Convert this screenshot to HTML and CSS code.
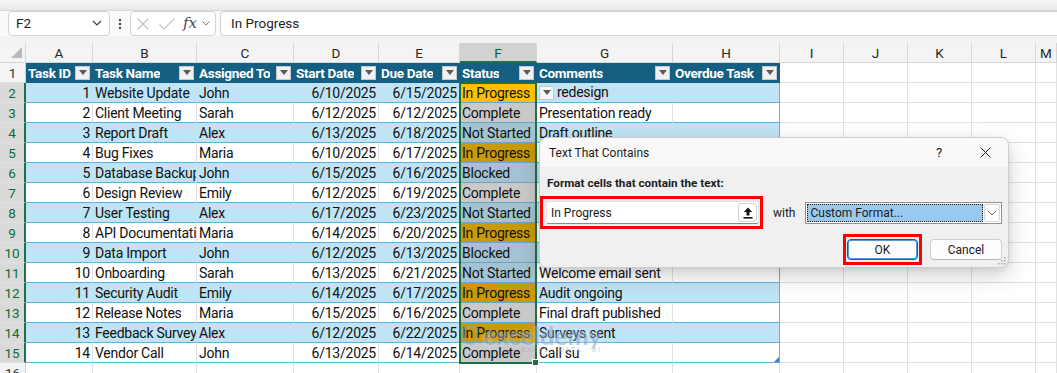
FILE: index.html
```html
<!DOCTYPE html>
<html lang="en">
<head>
<meta charset="utf-8">
<title>Text That Contains</title>
<link rel="stylesheet" href="styles.css">
</head>
<body>
<div class="app">
  <div class="ribbon-edge"></div>
  <div class="formula-bar">
    <div class="box name-box"><span>F2</span>
      <svg width="10" height="6" viewBox="0 0 10 6"><path d="M1 1 L5 5 L9 1" fill="none" stroke="#3a3a3a" stroke-width="1.2"/></svg>
    </div>
    <div class="fb-dots">
      <svg width="4" height="12" viewBox="0 0 4 12"><circle cx="2" cy="2" r="1.2" fill="#444"/><circle cx="2" cy="6" r="1.2" fill="#444"/><circle cx="2" cy="10" r="1.2" fill="#444"/></svg>
    </div>
    <div class="box fx-box">
      <svg class="ic-x" width="12" height="12" viewBox="0 0 12 12"><path d="M0.5 0.5 L11.5 11.5 M11.5 0.5 L0.5 11.5" stroke="#c2c2c2" stroke-width="1.1"/></svg>
      <svg class="ic-ok" width="16" height="12" viewBox="0 0 16 12"><path d="M0.5 6.5 L5 11 L15.5 0.5" fill="none" stroke="#c2c2c2" stroke-width="1.1"/></svg>
      <span class="fx">fx</span>
      <svg class="ic-chev" width="8" height="5" viewBox="0 0 8 5"><path d="M0.5 0.5 L4 4 L7.5 0.5" fill="none" stroke="#777" stroke-width="1"/></svg>
    </div>
    <div class="box formula-input">In Progress</div>
  </div>
  <div class="strip"></div>

  <div class="sheet">
    <div class="row colhead">
      <div class="corner"><svg width="11" height="11" viewBox="0 0 11 11"><path d="M11 0 L11 11 L0 11 Z" fill="#b9b9b9"/></svg></div>
      <div>A</div><div>B</div><div>C</div><div>D</div><div>E</div><div class="sel">F</div><div>G</div><div>H</div><div>I</div><div>J</div><div>K</div><div>L</div><div>M</div>
    </div>

    <div class="row thead">
      <div class="rh">1</div>
      <div class="h"><span class="hl-txt">Task ID</span><span class="fbtn"><svg width="8" height="5" viewBox="0 0 8 5"><path d="M0 0 H8 L4 5 Z" fill="#5a5a5a"/></svg></span></div>
      <div class="h"><span class="hl-txt">Task Name</span><span class="fbtn"><svg width="8" height="5" viewBox="0 0 8 5"><path d="M0 0 H8 L4 5 Z" fill="#5a5a5a"/></svg></span></div>
      <div class="h"><span class="hl-txt">Assigned To</span><span class="fbtn"><svg width="8" height="5" viewBox="0 0 8 5"><path d="M0 0 H8 L4 5 Z" fill="#5a5a5a"/></svg></span></div>
      <div class="h"><span class="hl-txt">Start Date</span><span class="fbtn"><svg width="8" height="5" viewBox="0 0 8 5"><path d="M0 0 H8 L4 5 Z" fill="#5a5a5a"/></svg></span></div>
      <div class="h"><span class="hl-txt">Due Date</span><span class="fbtn"><svg width="8" height="5" viewBox="0 0 8 5"><path d="M0 0 H8 L4 5 Z" fill="#5a5a5a"/></svg></span></div>
      <div class="h"><span class="hl-txt">Status</span><span class="fbtn"><svg width="8" height="5" viewBox="0 0 8 5"><path d="M0 0 H8 L4 5 Z" fill="#5a5a5a"/></svg></span></div>
      <div class="h"><span class="hl-txt">Comments</span><span class="fbtn"><svg width="8" height="5" viewBox="0 0 8 5"><path d="M0 0 H8 L4 5 Z" fill="#5a5a5a"/></svg></span></div>
      <div class="h"><span class="hl-txt">Overdue Task</span><span class="fbtn"><svg width="8" height="5" viewBox="0 0 8 5"><path d="M0 0 H8 L4 5 Z" fill="#5a5a5a"/></svg></span></div>
      <div></div><div></div><div></div><div></div><div></div>
    </div>

    <div class="row band">
      <div class="rh sel">2</div>
      <div class="t num">1</div><div class="t">Website Update</div><div class="t">John</div><div class="t num">6/10/2025</div><div class="t num">6/15/2025</div>
      <div class="t st ip act">In Progress</div>
      <div class="t cmt"><span class="dd"><svg width="8" height="5" viewBox="0 0 8 5"><path d="M0 0 H8 L4 5 Z" fill="#5a5a5a"/></svg></span>redesign</div>
      <div class="t te"></div>
      <div></div><div></div><div></div><div></div><div></div>
    </div>

    <div class="row plain">
      <div class="rh sel">3</div>
      <div class="t num">2</div><div class="t">Client Meeting</div><div class="t">Sarah</div><div class="t num">6/12/2025</div><div class="t num">6/12/2025</div>
      <div class="t st cp">Complete</div>
      <div class="t">Presentation ready</div>
      <div class="t te"></div>
      <div></div><div></div><div></div><div></div><div></div>
    </div>

    <div class="row band">
      <div class="rh sel">4</div>
      <div class="t num">3</div><div class="t">Report Draft</div><div class="t">Alex</div><div class="t num">6/13/2025</div><div class="t num">6/18/2025</div>
      <div class="t st ns">Not Started</div>
      <div class="t">Draft outline</div>
      <div class="t te"></div>
      <div></div><div></div><div></div><div></div><div></div>
    </div>

    <div class="row plain">
      <div class="rh sel">5</div>
      <div class="t num">4</div><div class="t">Bug Fixes</div><div class="t">Maria</div><div class="t num">6/10/2025</div><div class="t num">6/17/2025</div>
      <div class="t st ip">In Progress</div>
      <div class="t">In review</div>
      <div class="t te"></div>
      <div></div><div></div><div></div><div></div><div></div>
    </div>

    <div class="row band">
      <div class="rh sel">6</div>
      <div class="t num">5</div><div class="t">Database Backup</div><div class="t">John</div><div class="t num">6/15/2025</div><div class="t num">6/16/2025</div>
      <div class="t st ns">Blocked</div>
      <div class="t">Awaiting access</div>
      <div class="t te"></div>
      <div></div><div></div><div></div><div></div><div></div>
    </div>

    <div class="row plain">
      <div class="rh sel">7</div>
      <div class="t num">6</div><div class="t">Design Review</div><div class="t">Emily</div><div class="t num">6/12/2025</div><div class="t num">6/19/2025</div>
      <div class="t st cp">Complete</div>
      <div class="t">Client approved</div>
      <div class="t te"></div>
      <div></div><div></div><div></div><div></div><div></div>
    </div>

    <div class="row band">
      <div class="rh sel">8</div>
      <div class="t num">7</div><div class="t">User Testing</div><div class="t">Alex</div><div class="t num">6/17/2025</div><div class="t num">6/23/2025</div>
      <div class="t st ns">Not Started</div>
      <div class="t">Awaiting feedback</div>
      <div class="t te"></div>
      <div></div><div></div><div></div><div></div><div></div>
    </div>

    <div class="row plain">
      <div class="rh sel">9</div>
      <div class="t num">8</div><div class="t">API Documentation</div><div class="t">Maria</div><div class="t num">6/14/2025</div><div class="t num">6/20/2025</div>
      <div class="t st ip">In Progress</div>
      <div class="t">as per spec</div>
      <div class="t te"></div>
      <div></div><div></div><div></div><div></div><div></div>
    </div>

    <div class="row band">
      <div class="rh sel">10</div>
      <div class="t num">9</div><div class="t">Data Import</div><div class="t">John</div><div class="t num">6/12/2025</div><div class="t num">6/13/2025</div>
      <div class="t st ns">Blocked</div>
      <div class="t">Import pending</div>
      <div class="t te"></div>
      <div></div><div></div><div></div><div></div><div></div>
    </div>

    <div class="row plain">
      <div class="rh sel">11</div>
      <div class="t num">10</div><div class="t">Onboarding</div><div class="t">Sarah</div><div class="t num">6/13/2025</div><div class="t num">6/21/2025</div>
      <div class="t st ns">Not Started</div>
      <div class="t">Welcome email sent</div>
      <div class="t te"></div>
      <div></div><div></div><div></div><div></div><div></div>
    </div>

    <div class="row band">
      <div class="rh sel">12</div>
      <div class="t num">11</div><div class="t">Security Audit</div><div class="t">Emily</div><div class="t num">6/14/2025</div><div class="t num">6/17/2025</div>
      <div class="t st ip">In Progress</div>
      <div class="t">Audit ongoing</div>
      <div class="t te"></div>
      <div></div><div></div><div></div><div></div><div></div>
    </div>

    <div class="row plain">
      <div class="rh sel">13</div>
      <div class="t num">12</div><div class="t">Release Notes</div><div class="t">Maria</div><div class="t num">6/15/2025</div><div class="t num">6/16/2025</div>
      <div class="t st cp">Complete</div>
      <div class="t">Final draft published</div>
      <div class="t te"></div>
      <div></div><div></div><div></div><div></div><div></div>
    </div>

    <div class="row band">
      <div class="rh sel">14</div>
      <div class="t num">13</div><div class="t">Feedback Survey</div><div class="t">Alex</div><div class="t num">6/12/2025</div><div class="t num">6/22/2025</div>
      <div class="t st ip">In Progress</div>
      <div class="t">Surveys sent</div>
      <div class="t te"></div>
      <div></div><div></div><div></div><div></div><div></div>
    </div>

    <div class="row plain">
      <div class="rh sel">15</div>
      <div class="t num">14</div><div class="t">Vendor Call</div><div class="t">John</div><div class="t num">6/13/2025</div><div class="t num">6/14/2025</div>
      <div class="t st cp">Complete</div>
      <div class="t">Call su</div>
      <div class="t te"></div>
      <div></div><div></div><div></div><div></div><div></div>
    </div>

    <div class="row">
      <div class="rh">16</div>
      <div></div><div></div><div></div><div></div><div></div><div></div><div></div><div></div><div></div><div></div><div></div><div></div><div></div>
    </div>

    <div class="selection"></div>
    <div class="fill-handle"></div>
    <svg class="tbl-grip" width="5" height="5" viewBox="0 0 5 5"><path d="M5 0 V5 H0 Z" fill="#3b7fc4"/></svg>
  </div>

  <div class="watermark">
    <svg width="20" height="22" viewBox="0 0 20 22"><path d="M3 5 Q10 0 17 5 L16 17 Q10 22 4 17 Z" fill="none" stroke="#7ea2cf" stroke-width="2.5"/></svg>
    <div class="wm-text"><span class="wm-main">exceldemy</span><span class="wm-sub">EXCEL · DATA · BI</span></div>
  </div>

  <div class="dialog">
    <div class="dlg-title">
      <span class="tt">Text That Contains</span>
      <span class="tb">?</span>
      <span class="tb"><svg width="11" height="11" viewBox="0 0 11 11"><path d="M0.5 0.5 L10.5 10.5 M10.5 0.5 L0.5 10.5" stroke="#1b1b1b" stroke-width="1"/></svg></span>
    </div>
    <div class="dlg-body">
      <div class="lbl">Format cells that contain the text:</div>
      <div class="in-row">
        <div class="hl hl-in">
          <div class="tbox"><span>In Progress</span>
            <span class="collapse"><svg width="10" height="12" viewBox="0 0 10 12"><path d="M5 0.5 L0.8 5 H3.5 V8.5 H6.5 V5 H9.2 Z" fill="#111"/><rect x="0.5" y="10" width="9" height="1.6" fill="#111"/></svg></span>
          </div>
        </div>
        <span class="with">with</span>
        <div class="combo">
          <span class="val">Custom Format...</span>
          <span class="cdd"><svg width="10" height="6" viewBox="0 0 10 6"><path d="M1 1 L5 5 L9 1" fill="none" stroke="#666" stroke-width="1"/></svg></span>
        </div>
      </div>
      <div class="btn-row">
        <div class="hl hl-ok"><div class="btn ok">OK</div></div>
        <div class="btn cancel">Cancel</div>
      </div>
    </div>
    <svg class="grip" width="8" height="8" viewBox="0 0 8 8"><rect x="6" y="0" width="1.5" height="1.5" fill="#a8a8a8"/><rect x="3" y="3" width="1.5" height="1.5" fill="#a8a8a8"/><rect x="6" y="3" width="1.5" height="1.5" fill="#a8a8a8"/><rect x="0" y="6" width="1.5" height="1.5" fill="#a8a8a8"/><rect x="3" y="6" width="1.5" height="1.5" fill="#a8a8a8"/><rect x="6" y="6" width="1.5" height="1.5" fill="#a8a8a8"/></svg>
  </div>
</div>
</body>
</html>
```

FILE: styles.css
```css
* { box-sizing: border-box; margin: 0; padding: 0; }
:root {
  --cols: 26px 67px 104px 97px 85px 81px 77px 136px 107px 64px 64px 64px 64px 1fr;
}
body {
  margin: 0;
  background: #fff;
  font-family: Roboto, "Liberation Sans", sans-serif;
  color: #000;
  overflow: hidden;
}
.app {
  position: relative;
  width: 1057px;
  height: 373px;
  overflow: hidden;
  background: #fff;
}

/* top */
.ribbon-edge {
  height: 11px;
  background: linear-gradient(#f6f6f6, #e8e8e8);
  border-bottom: 1px solid #d6d6d6;
}
.formula-bar {
  display: flex;
  height: 25px;
  background: #fafafa;
  padding-left: 8px;
}
.box {
  background: #fff;
  border: 1px solid #d4d4d4;
  border-radius: 4px;
  display: flex;
  align-items: center;
}
.name-box {
  width: 102px;
  padding: 0 7px 1px 7px;
  justify-content: space-between;
  font-size: 13.5px;
  color: #1e1e1e;
}
.fb-dots {
  width: 20px;
  display: flex;
  align-items: center;
  justify-content: center;
}
.fx-box {
  width: 86px;
  padding-left: 6px;
}
.ic-ok { margin-left: 10px; }
.fx {
  margin-left: 8px;
  font-family: "DejaVu Serif", "Liberation Serif", serif;
  font-style: italic;
  font-size: 15px;
  color: #4a4a4a;
  line-height: 1;
}
.ic-chev { margin-left: 5px; }
.formula-input {
  flex: 1;
  margin-left: 4px;
  padding: 0 0 1px 10px;
  border-right: none;
  border-radius: 4px 0 0 4px;
  font-size: 13.5px;
  color: #1e1e1e;
}
.strip {
  height: 7px;
  background: #f3f3f3;
}

/* sheet */
.sheet { position: relative; }
.row {
  display: grid;
  grid-template-columns: var(--cols);
  height: 20px;
}
.row > div {
  border-right: 1px solid #e1e1e1;
  border-bottom: 1px solid #e1e1e1;
  font-size: 14px;
  letter-spacing: -0.25px;
  line-height: 19px;
  padding: 1px 2px 0 2px;
  white-space: nowrap;
  overflow: hidden;
  color: #111;
}
.colhead > div {
  background: #f4f4f4;
  border-right-color: #d6d6d6;
  border-bottom-color: #d6d6d6;
  text-align: center;
  font-size: 13.5px;
  letter-spacing: 0;
  color: #262626;
}
.colhead > .sel {
  background: #d2d2d2;
  color: #0f5a2e;
  border-bottom: 2px solid #1e7145;
  line-height: 18px;
}
.colhead .corner {
  position: relative;
  padding: 0;
}
.corner svg {
  position: absolute;
  right: 3px;
  bottom: 4px;
}
.row > .rh {
  background: #f4f4f4;
  border-right-color: #d0d0d0;
  text-align: center;
  font-size: 13.5px;
  letter-spacing: 0;
  color: #333;
  padding: 1px 0 0 0;
}
.row > .rh.sel {
  background: #dadada;
  color: #0f6b38;
  border-right: 2px solid #1e7145;
}

/* table */
.thead > .h {
  background: #156082;
  border-right-color: #156082;
  border-bottom-color: #156082;
  color: #fff;
  font-weight: 700;
  font-size: 13.5px;
  letter-spacing: -0.3px;
  display: flex;
  align-items: center;
  justify-content: space-between;
  padding: 0 2px 0 2px;
}
.hl-txt { overflow: hidden; padding-top: 1px; }
.fbtn, .dd {
  flex: none;
  width: 15px;
  height: 14px;
  background: #f1f1f1;
  border: 1px solid #c8c8c8;
  display: inline-flex;
  align-items: center;
  justify-content: center;
}
.row > .t { border-bottom-color: #5bb3e0; }
.band > .t {
  background: #c0e4f5;
  border-right-color: #c0e4f5;
}
.row > .te { border-right-color: #5bb3e0; }
.num { text-align: right; }
.row > .st.ip { background: #c99a06; }
.row > .st.act { background: #ffc000; }
.row > .st.cp { background: #c9c9c9; }
.row > .st.ns { background: #a4c3d2; }
.row > .st { border-bottom-color: #6aa6c4; }
.row > .cmt { display: flex; align-items: center; padding-top: 0; }
.dd {
  margin: 0 3px 0 0;
  background: #f7f7f7;
}

.selection {
  position: absolute;
  left: 459px;
  top: 39px;
  width: 78px;
  height: 282px;
  border: 2px solid #1e7145;
  pointer-events: none;
}
.fill-handle {
  position: absolute;
  left: 532px;
  top: 316px;
  width: 7px;
  height: 7px;
  background: #1e7145;
  border: 1px solid #fff;
}
.tbl-grip {
  position: absolute;
  left: 774px;
  top: 314px;
}

/* watermark */
.watermark {
  position: absolute;
  left: 460px;
  top: 324px;
  display: flex;
  align-items: flex-start;
  gap: 3px;
  opacity: 0.55;
  pointer-events: none;
}
.wm-text { display: flex; flex-direction: column; align-items: flex-end; }
.wm-main {
  font-family: Lato, Roboto, sans-serif;
  font-weight: 700;
  font-size: 25px;
  line-height: 22px;
  color: #86a9d4;
  text-shadow: 0 0 4px rgba(255, 255, 255, 0.9);
}
.wm-sub {
  font-size: 7px;
  letter-spacing: 1.5px;
  color: #9aa9bb;
}

/* dialog */
.dialog {
  position: absolute;
  left: 539px;
  top: 137px;
  width: 470px;
  height: 131px;
  background: #f0f0f0;
  border: 1px solid #cdcdcd;
  border-radius: 8px;
  box-shadow: 0 8px 22px rgba(0, 0, 0, 0.18), 0 2px 6px rgba(0, 0, 0, 0.08);
  font-family: Roboto, "Liberation Sans", sans-serif;
  font-size: 12px;
  color: #1b1b1b;
  overflow: hidden;
  display: flex;
  flex-direction: column;
}
.dlg-title {
  height: 29px;
  flex: none;
  background: #f9f9f9;
  display: flex;
  align-items: center;
  padding-left: 9px;
}
.dlg-title .tt { flex: 1; }
.tb {
  width: 46px;
  height: 29px;
  display: flex;
  align-items: center;
  justify-content: center;
  font-size: 13px;
}
.tb:first-of-type { padding-left: 3px; }
.dlg-body {
  flex: 1;
  display: flex;
  flex-direction: column;
  padding: 8px 6px 0 0;
}
.lbl {
  font-weight: 700;
  font-size: 11.7px;
  line-height: 16px;
  margin-left: 7px;
}
.in-row {
  display: flex;
  align-items: center;
  margin-top: 5px;
  height: 33px;
}
.hl { border: 3px solid #ff0000; }
.hl-in { padding: 2px 1px 2px 3px; }
.tbox {
  width: 213px;
  height: 23px;
  background: #fff;
  border: 1px solid #e2e2e2;
  border-bottom-color: #8a8a8a;
  border-radius: 3px;
  display: flex;
  align-items: center;
  justify-content: space-between;
  padding: 0 1px 0 4px;
}
.collapse {
  width: 19px;
  height: 19px;
  border: 1px solid #d2d2d2;
  border-radius: 3px;
  background: #fff;
  display: flex;
  align-items: center;
  justify-content: center;
}
.with {
  margin-left: 10px;
  width: 23px;
}
.combo {
  margin-left: 10px;
  width: 197px;
  height: 22px;
  border: 1px solid #8f8f8f;
  background: #fff;
  display: flex;
  align-items: center;
  padding: 1px;
}
.combo .val {
  width: 176px;
  height: 18px;
  background: #99c9ef;
  outline: 1px dotted #222;
  outline-offset: -1px;
  padding-left: 3px;
  line-height: 18px;
}
.cdd {
  width: 17px;
  height: 18px;
  margin-left: 1px;
  border: 1px solid #d6d6d6;
  border-radius: 2px;
  display: flex;
  align-items: center;
  justify-content: center;
}
.btn-row {
  display: flex;
  justify-content: flex-end;
  align-items: center;
  margin-top: 5px;
  height: 31px;
}
.hl-ok { padding: 2px 1px; }
.btn {
  height: 21px;
  border-radius: 4px;
  background: #fdfdfd;
  border: 1px solid #d0d0d0;
  border-bottom-color: #b8b8b8;
  display: flex;
  align-items: center;
  justify-content: center;
}
.ok {
  width: 71px;
  border: 1px solid #005fb8;
  box-shadow: inset 0 0 0 1px #5a9ad6;
}
.cancel {
  width: 72px;
  margin-left: 8px;
}
.grip {
  position: absolute;
  right: 2px;
  bottom: 2px;
}
```
